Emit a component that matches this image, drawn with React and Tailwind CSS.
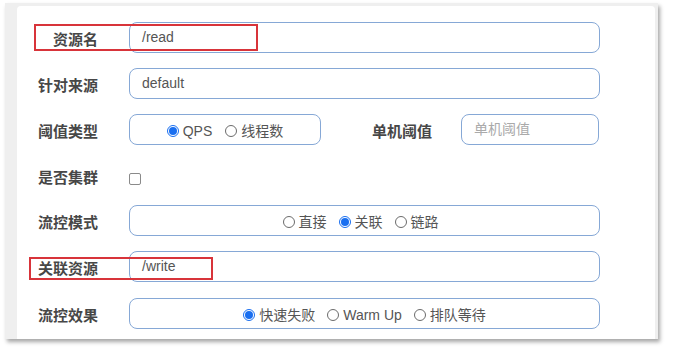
import React from "react";

const Radio = ({ checked, label }) => (
  <span className="flex items-center gap-[4px]">
    {checked ? (
      <span className="w-[12px] h-[12px] rounded-full border border-[#1a6ff0] flex items-center justify-center bg-white">
        <span className="w-[8px] h-[8px] rounded-full bg-[#1a6ff0]" />
      </span>
    ) : (
      <span className="w-[12px] h-[12px] rounded-full border border-[#6b6b6b] bg-white" />
    )}
    <span>{label}</span>
  </span>
);

const Label = ({ children, className = "" }) => (
  <div
    className={
      "w-[81px] text-right pt-[5px] text-[15px] font-bold text-[#474747] " +
      className
    }
  >
    {children}
  </div>
);

const boxCls =
  "h-[31px] rounded-[8px] border border-[#86a8d6] bg-white flex items-center";

const App = () => {
  return (
    <div
      className="w-[673px] h-[350px] bg-white pt-[3px] pl-[5px] text-[14px] text-[#555]"
      style={{ fontFamily: '"Liberation Sans", "Noto Sans CJK SC", sans-serif' }}
    >
      <div className="w-[653px] h-[336px] bg-[#efefef] pt-[3px] pl-[12px] shadow-[2px_3px_4px_rgba(0,0,0,0.35)]">
        <div className="w-[638px] h-[333px] bg-white rounded-t-[4px] pt-[16px] flex flex-col gap-[15px]">
          {/* 资源名 */}
          <div className="relative flex items-center h-[31px]">
            <Label>资源名</Label>
            <div className={boxCls + " ml-[31px] w-[471px] pl-[12px]"}>/read</div>
            <div className="absolute left-[17px] top-[2px] w-[224px] h-[27px] border-2 border-[#d8343a]" />
          </div>

          {/* 针对来源 */}
          <div className="flex items-center h-[31px]">
            <Label>针对来源</Label>
            <div className={boxCls + " ml-[31px] w-[471px] pl-[12px]"}>default</div>
          </div>

          {/* 阈值类型 */}
          <div className="flex items-center h-[31px]">
            <Label>阈值类型</Label>
            <div className={boxCls + " ml-[31px] w-[192px] justify-center gap-[13px] pt-[3px]"}>
              <Radio checked label="QPS" />
              <Radio label="线程数" />
            </div>
            <div className="ml-[51px] w-[60px] pt-[5px] text-[15px] font-bold text-[#474747]">
              单机阈值
            </div>
            <div className={boxCls + " ml-[29px] w-[138px] pl-[12px] text-[#aaa]"}>单机阈值</div>
          </div>

          {/* 是否集群 */}
          <div className="flex items-center h-[31px]">
            <Label>是否集群</Label>
            <div className="ml-[31px] mt-[7px] w-[12px] h-[12px] rounded-[2px] border border-[#8a8a8a]" />
          </div>

          {/* 流控模式 */}
          <div className="flex items-center h-[31px] -mt-[1px]">
            <Label>流控模式</Label>
            <div className={boxCls + " ml-[31px] w-[471px] justify-center gap-[12px] pr-[8px] pt-[3px]"}>
              <Radio label="直接" />
              <Radio checked label="关联" />
              <Radio label="链路" />
            </div>
          </div>

          {/* 关联资源 */}
          <div className="relative flex items-center h-[31px]">
            <Label>关联资源</Label>
            <div className={boxCls + " ml-[31px] w-[471px] pl-[12px]"}>/write</div>
            <div className="absolute left-[12px] top-[6px] w-[184px] h-[23px] border-2 border-[#d8343a]" />
          </div>

          {/* 流控效果 */}
          <div className="flex items-center h-[31px] mt-[1px]">
            <Label>流控效果</Label>
            <div className={boxCls + " ml-[31px] w-[471px] justify-center gap-[12px] pt-[3px]"}>
              <Radio checked label="快速失败" />
              <Radio label="Warm Up" />
              <Radio label="排队等待" />
            </div>
          </div>
        </div>
      </div>
    </div>
  );
};

export default App;
